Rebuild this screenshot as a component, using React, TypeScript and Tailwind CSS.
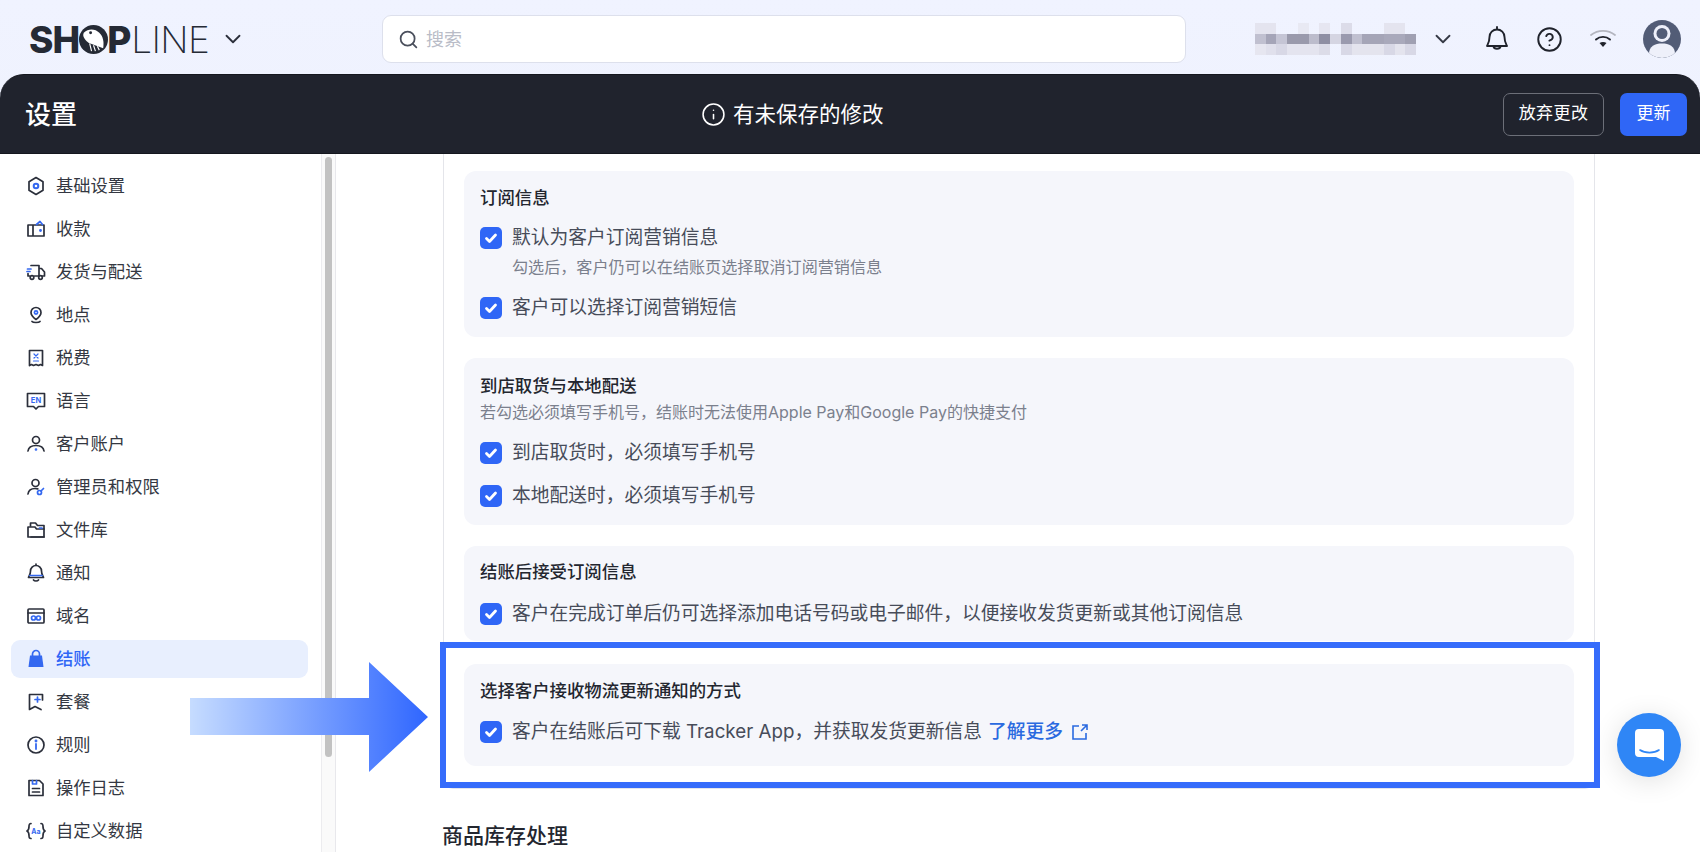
import { ChevronDown, CircleHelp, Info, Search } from "lucide-react";
import type { ReactNode } from "react";

const font = "font-['Inter','Noto_Sans_CJK_SC',sans-serif]";

const D = "#2b2f3b";
const B = "#3468f0";

function Ico({ children }: { children: ReactNode }) {
  return (
    <svg viewBox="0 0 20 20" fill="none" stroke={D} strokeWidth="1.7" strokeLinejoin="round" strokeLinecap="round" className="w-5 h-5 shrink-0">
      {children}
    </svg>
  );
}

const menu: { label: string; icon: ReactNode; active?: boolean }[] = [
  {
    label: "基础设置",
    icon: (
      <Ico>
        <path d="M10 1.500l7 4.200v8.600l-7 4.200-7-4.200V5.700z" />
        <circle cx="10" cy="10" r="2.300" stroke={B} strokeWidth="2" />
      </Ico>
    ),
  },
  {
    label: "收款",
    icon: (
      <Ico>
        <path d="M2 6h16v11H2zM7 6v11" />
        <path d="M10.500 5.500L14 2.500l2.500 3" stroke={B} />
        <circle cx="14.500" cy="11.500" r=".6" fill={B} stroke={B} />
      </Ico>
    ),
  },
  {
    label: "发货与配送",
    icon: (
      <Ico>
        <path d="M5 3.500h8v10.500H8.500M13 6.500h2.500l3 3.500v4H16.500M3.500 14H2v-2.500" />
        <circle cx="6" cy="15.500" r="1.800" />
        <circle cx="14.500" cy="15.500" r="1.800" />
        <path d="M1.500 7h3.500M1 9.500h3" stroke={B} />
      </Ico>
    ),
  },
  {
    label: "地点",
    icon: (
      <Ico>
        <path d="M10 14.500c3-2.200 5-4.300 5-7a5 5 0 10-10 0c0 2.700 2 4.800 5 7z" />
        <circle cx="10" cy="7.500" r="1.600" stroke={B} />
        <path d="M6 16.500c1 1.300 7 1.300 8 0" />
      </Ico>
    ),
  },
  {
    label: "税费",
    icon: (
      <Ico>
        <path d="M3.500 2.500h13v15l-2-1-2 1-2.500-1-2.500 1-2-1-2 1z" />
        <path d="M8 6l4 4M12 6l-4 4M7.500 13h5" stroke={B} strokeWidth="1.200" />
      </Ico>
    ),
  },
  {
    label: "语言",
    icon: (
      <Ico>
        <path d="M1.500 2.500h17v13h-6L10 18l-2.500-2.500h-6z" />
        <text x="10" y="12" textAnchor="middle" fontSize="7.500" fontWeight="700" fill={B} stroke="none" fontFamily="Inter">EN</text>
      </Ico>
    ),
  },
  {
    label: "客户账户",
    icon: (
      <Ico>
        <circle cx="10" cy="6" r="3.500" />
        <path d="M2 17c.5-3.500 3.500-5.500 8-5.500s7.500 2 8 5.500" />
        <circle cx="10" cy="15.500" r=".5" fill={B} stroke={B} />
      </Ico>
    ),
  },
  {
    label: "管理员和权限",
    icon: (
      <Ico>
        <circle cx="9.500" cy="6" r="3.500" />
        <path d="M2 17c.5-3.500 3-5.500 7-5.500 1 0 2 .1 2.800.4" />
        <circle cx="13.500" cy="15.500" r="2" stroke={B} />
        <path d="M15 14l2.500-2.500" stroke={B} />
      </Ico>
    ),
  },
  {
    label: "文件库",
    icon: (
      <Ico>
        <path d="M4.500 6V3h5l2 2.500h6.500V17H5" />
        <path d="M2 7h7l1.500 2H18M2 7v10h16" />
        <path d="M13.500 8h2.500" stroke={B} />
      </Ico>
    ),
  },
  {
    label: "通知",
    icon: (
      <Ico>
        <path d="M10 2.500a5.500 5.500 0 00-5.500 5.500c0 3.500-1.500 5-2 6.500h15c-.5-1.500-2-3-2-6.500A5.500 5.500 0 0010 2.500zM10 1v1.500" />
        <path d="M3.800 12.500h12.400" stroke={B} />
        <path d="M7.500 17c1 1.300 4 1.300 5 0" />
      </Ico>
    ),
  },
  {
    label: "域名",
    icon: (
      <Ico>
        <rect x="2" y="3" width="16" height="14" rx="1" />
        <path d="M2 7h16" />
        <circle cx="7.500" cy="12" r="2" stroke={B} />
        <circle cx="12.500" cy="12" r="2" stroke={B} />
      </Ico>
    ),
  },
  {
    label: "结账",
    active: true,
    icon: (
      <svg viewBox="0 0 20 20" className="w-5 h-5 shrink-0">
        <path d="M6.500 7V5a3.500 3.500 0 017 0v2" fill="none" stroke={B} strokeWidth="1.700" />
        <path d="M4 6.500h12l1.500 11.500h-15z" fill={B} />
      </svg>
    ),
  },
  {
    label: "套餐",
    icon: (
      <Ico>
        <path d="M16.500 8V2.500h-13V17.500L9 14.500l6 3" />
        <path d="M11.500 5v5M9 7.500h5" stroke={B} />
      </Ico>
    ),
  },
  {
    label: "规则",
    icon: (
      <Ico>
        <circle cx="10" cy="10" r="8" />
        <path d="M10 9v5" strokeWidth="1.800" stroke={B} />
        <circle cx="10" cy="6" r=".6" fill={B} stroke={B} />
      </Ico>
    ),
  },
  {
    label: "操作日志",
    icon: (
      <Ico>
        <path d="M3 2.500h10.500l3.500 3.500v11.500H3z" />
        <path d="M6.500 2.500v3.500h4V2.500" stroke={B} />
        <path d="M6.500 10.500h7M6.500 14h7" />
      </Ico>
    ),
  },
  {
    label: "自定义数据",
    icon: (
      <Ico>
        <path d="M5 2.500c-2 0-2 1-2 3s0 3.500-2 4.500c2 1 2 2.500 2 4.500s0 3 2 3M15 2.500c2 0 2 1 2 3s0 3.500 2 4.500c-2 1-2 2.500-2 4.500s0 3-2 3" />
        <text x="10" y="12.500" textAnchor="middle" fontSize="7" fontWeight="700" fill={B} stroke="none" fontFamily="Inter">Aa</text>
      </Ico>
    ),
  },
];

// blurred account name, one row per pixel band
const mosaic = [
  ["#e4e4ef", "#e4e4ef", "", "", "#e8e9f3", "", "#e6e6f1", "", "#dcdce9", "", "", "", "#e4e4ef", "#e4e4ef", ""],
  ["#c0c0d0", "#a5a5b8", "#c5c5d5", "#9a9aac", "#9a9aac", "#bcbccc", "#8f8fa3", "#d5d5e2", "#9a9aae", "#c0c0d0", "#a5a5b7", "#a5a5b7", "#a9a9bb", "#a9a9bb", "#a0a0b2"],
  ["#e6e6f0", "#e0e0ec", "#d8d8e6", "#e4e4ef", "#e4e4ef", "#e4e4ef", "#dcdce8", "", "#d8d8e6", "#e4e4ee", "#e4e4ee", "#e4e4ee", "#d8d8e6", "#e4e4ee", "#d8d8e6"],
];

function Mosaic() {
  return (
    <svg width="161" height="32" viewBox="0 0 15 3" preserveAspectRatio="none" shapeRendering="crispEdges" className="shrink-0">
      {mosaic.map((row, y) =>
        row.map((c, x) => (c ? <rect key={`${x}-${y}`} x={x} y={y} width="1" height="1" fill={c} /> : null)),
      )}
    </svg>
  );
}

function Logo() {
  return (
    <div className="w-[178px] shrink-0 flex items-center h-[32px] text-[37px] leading-none text-[#252a35] font-['Inter',sans-serif]">
      <span className="font-extrabold tracking-[-1px]">SH</span>
      <svg viewBox="0 0 30 30" className="w-[29px] h-[29px] shrink-0">
        <circle cx="15" cy="15" r="15" fill="#252a35" />
        <path d="M5 8c5-5 12-4 16 0s5 9 4 16L11 19C6 16 3 11 5 8z" fill="#fff" />
        <circle cx="12" cy="8" r="1.500" fill="#252a35" />
        <path d="M11 19l2 8M15 21l2 6M19 22l2 4" stroke="#fff" strokeWidth="1.200" />
      </svg>
      <span className="font-extrabold -ml-[1px]">P</span>
      <span className="font-extralight tracking-[-0.6px]">LINE</span>
    </div>
  );
}

function Check({ label, children }: { label?: string; children?: ReactNode }) {
  return (
    <div className="flex items-center h-[30px] gap-[10px]">
      <span className="w-[22px] h-[22px] rounded-[5px] bg-[#2f66f6] flex items-center justify-center shrink-0">
        <svg viewBox="0 0 16 16" className="w-[16px] h-[16px]" fill="none" stroke="#fff" strokeWidth="2.800" strokeLinecap="round" strokeLinejoin="round">
          <path d="M3.500 8.500l3 3 6-6.500" />
        </svg>
      </span>
      <span className="text-[18.75px] leading-[30px] text-[#474c59] whitespace-nowrap">{label}{children}</span>
    </div>
  );
}

function Title({ children }: { children: ReactNode }) {
  return <h3 className="text-[17.4px] leading-[26px] font-medium text-[#23262f]">{children}</h3>;
}

export default function App() {
  return (
    <div className={`${font} w-[1700px] h-[852px] relative overflow-hidden bg-gradient-to-b from-[#f0f3ff] to-[#e9ecf7]`}>
      {/* top nav */}
      <header className="h-[74px] pt-[4px] flex items-center pl-[29px]">
        <Logo />
        <ChevronDown className="w-[26px] h-[26px] ml-[13px] shrink-0 text-[#2b2f3b]" strokeWidth={1.700} />
        <div className="ml-[136px] w-[804px] h-[48px] shrink-0 flex items-center rounded-[9px] bg-white border border-[#dde0ec] pl-[15px]">
          <Search className="w-[21px] h-[21px] text-[#4a4f5c]" strokeWidth={2} />
          <span className="ml-[7px] text-[18px] text-[#b9bcc7]">搜索</span>
        </div>
        <div className="ml-[69px] flex items-center">
          <Mosaic />
          <ChevronDown className="w-[26px] h-[26px] ml-[14px] shrink-0 text-[#353945]" strokeWidth={1.700} />
          <svg viewBox="0 0 24 28" fill="none" stroke="#20232c" strokeWidth="1.900" strokeLinejoin="round" strokeLinecap="round" className="w-[24px] h-[28px] ml-[29px] shrink-0">
            <path d="M12 4.500a7.500 7.500 0 00-7.500 7.500c0 5-1.500 7-2.500 9h20c-1-2-2.500-4-2.500-9A7.500 7.500 0 0012 4.500zM12 2v2.500" />
            <path d="M8.500 21.500c.5 3 6.500 3 7 0" />
          </svg>
          <CircleHelp className="w-[27px] h-[27px] ml-[27px] shrink-0 text-[#20232c]" strokeWidth={1.700} />
          <svg viewBox="0 0 26 18" fill="none" strokeLinecap="round" className="w-[26px] h-[18px] ml-[27px] shrink-0">
            <path d="M1 5c7-5.500 17-5.500 24 0" stroke="#b3b5bf" strokeWidth="1.700" />
            <path d="M6 9.500c4-3.500 10-3.500 14 0" stroke="#20232c" strokeWidth="1.900" />
            <path d="M9.500 13c2-1.300 5-1.300 7 0L13 17z" fill="#20232c" />
          </svg>
          <svg viewBox="0 0 38 38" className="w-[38px] h-[38px] ml-[27px] shrink-0">
            <defs>
              <clipPath id="av"><circle cx="19" cy="19" r="19" /></clipPath>
            </defs>
            <circle cx="19" cy="19" r="19" fill="#525c76" />
            <g clipPath="url(#av)">
              <path d="M6 34c0-8 6-10.500 13-10.500S32 26 32 34c-3 3-8 4-13 4s-10-1-13-4z" fill="#eef0fa" />
              <circle cx="19" cy="13.500" r="8.500" fill="#eef0fa" />
              <circle cx="19" cy="13.500" r="5.500" fill="#525c76" />
            </g>
          </svg>
        </div>
      </header>

      {/* save bar */}
      <div className="h-[80px] rounded-t-[24px] bg-[#20232d] border-y border-[#15171e] flex items-center pl-[25px] pr-[13px] text-white">
        <h1 className="text-[26px] font-medium w-[676px]">设置</h1>
        <div className="flex items-center gap-[7px] text-[21.5px]">
          <Info className="w-[25px] h-[25px]" strokeWidth={1.500} />
          有未保存的修改
        </div>
        <button className="ml-auto w-[101px] h-[43px] rounded-[7px] border border-[#6c6f78] text-[17px] tracking-[.4px]">放弃更改</button>
        <button className="ml-[16px] w-[67px] h-[43px] rounded-[7px] bg-[#2f66f6] text-[17px]">更新</button>
      </div>

      {/* body */}
      <div className="h-[698px] flex bg-white overflow-hidden">
        <aside className="w-[336px] shrink-0 flex border-r border-[#e8e8ec]">
          <nav className="w-[321px] pt-[10px] pl-[11px]">
            {menu.map((m) => (
              <div key={m.label} className="h-[43px] py-[2.500px]">
                <div className={`h-[38px] w-[297px] rounded-[9px] pl-[15px] flex items-center gap-[10px] text-[17.3px] ${m.active ? "bg-[#e8effe] text-[#2f66f6] font-medium" : "text-[#343842]"}`}>
                  {m.icon}
                  {m.label}
                </div>
              </div>
            ))}
          </nav>
          <div className="w-[14px] border-l border-[#ececef] bg-[#fafafa] pt-[3px] flex justify-center">
            <div className="w-[7px] h-[600px] rounded-full bg-[#c2c2c2]" />
          </div>
        </aside>

        <main className="pl-[107px]">
          <div className="w-[1152px] h-[635px] border-x border-b border-[#e4e5ea] rounded-b-[10px] pt-[17px] px-[20px] flex flex-col gap-[21px]">
            <section className="rounded-[12px] bg-[#f5f6fb] pl-[16px] pt-[14px] pb-[14px]">
              <Title>订阅信息</Title>
              <div className="mt-[12px]"><Check label="默认为客户订阅营销信息" /></div>
              <p className="mt-[2px] ml-[32px] text-[16.1px] leading-[24px] text-[#7b808d]">勾选后，客户仍可以在结账页选择取消订阅营销信息</p>
              <div className="mt-[14px]"><Check label="客户可以选择订阅营销短信" /></div>
            </section>

            <section className="rounded-[12px] bg-[#f5f6fb] pl-[16px] pt-[15px] pb-[14px]">
              <Title>到店取货与本地配送</Title>
              <p className="mt-[1px] text-[16px] leading-[24px] text-[#7b808d]">若勾选必须填写手机号，结账时无法使用Apple Pay和Google Pay的快捷支付</p>
              <div className="mt-[14px]"><Check label="到店取货时，必须填写手机号" /></div>
              <div className="mt-[13px]"><Check label="本地配送时，必须填写手机号" /></div>
            </section>

            <section className="rounded-[12px] bg-[#f5f6fb] pl-[16px] pt-[13px] pb-[12px]">
              <Title>结账后接受订阅信息</Title>
              <div className="mt-[14px]"><Check label="客户在完成订单后仍可选择添加电话号码或电子邮件，以便接收发货更新或其他订阅信息" /></div>
            </section>

            <section className="mt-[2px] rounded-[12px] bg-[#f5f6fb] pl-[16px] pt-[14px] pb-[19px]">
              <Title>选择客户接收物流更新通知的方式</Title>
              <div className="mt-[13px]">
                <Check>
                  客户在结账后可下载 Tracker App，并获取发货更新信息
                  <a className="ml-[6px] text-[#2a6ae0] inline-flex items-center gap-[8px] font-medium">
                    了解更多
                    <svg viewBox="0 0 18 18" fill="none" stroke="#2a6ae0" strokeWidth="1.600" className="w-[18px] h-[18px]">
                      <path d="M8 3H2v13h13v-6M10 8l6-6M11 2h5v5" />
                    </svg>
                  </a>
                </Check>
              </div>
            </section>
          </div>
          <h2 className="mt-[32px] -ml-[1px] text-[21px] leading-[30px] font-medium text-[#23262f]">商品库存处理</h2>
        </main>
      </div>

      {/* highlight overlay */}
      <div className="absolute left-[440px] top-[642px] w-[1160px] h-[146px] border-[6px] border-[#356cfb]" />

      {/* arrow */}
      <svg className="absolute left-[190px] top-[662px] blur-[0.6px]" width="238" height="110" viewBox="0 0 238 110">
        <defs>
          <linearGradient id="arw" x1="0" x2="1" y1="0" y2="0">
            <stop offset="0" stopColor="#c6dcff" />
            <stop offset="1" stopColor="#2f66ff" />
          </linearGradient>
        </defs>
        <path d="M0 36h179V0l59 55-59 55V73H0z" fill="url(#arw)" />
      </svg>

      {/* chat */}
      <div className="absolute left-[1617px] top-[713px] w-[64px] h-[64px] rounded-full bg-[#2f86f6] shadow-[0_4px_28px_rgba(0,0,0,0.12)] flex items-center justify-center">
        <svg viewBox="0 0 29 32" className="w-[29px] h-[32px]">
          <path d="M4 0h21a4 4 0 014 4v28l-8-4H4a4 4 0 01-4-4V4a4 4 0 014-4z" fill="#fff" />
          <path d="M5 21c5 3.500 14 3.500 19 0" fill="none" stroke="#2f86f6" strokeWidth="1.600" strokeLinecap="round" />
        </svg>
      </div>
    </div>
  );
}
